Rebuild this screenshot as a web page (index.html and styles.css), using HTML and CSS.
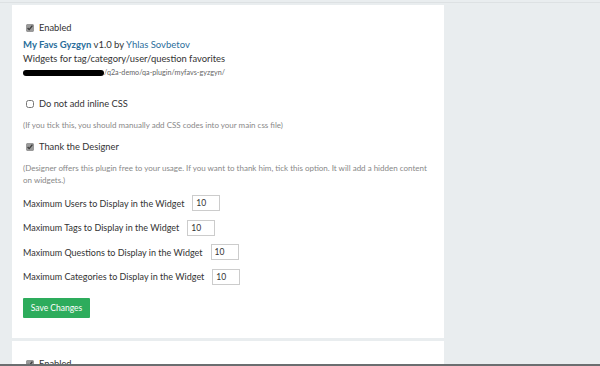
FILE: index.html
```html
<!DOCTYPE html>
<html lang="en">
  <head>
    <meta charset="UTF-8" />
    <title>Plugin options</title>
    <link rel="stylesheet" href="styles.css">
  </head>
  <body>
    <div class="topline"></div>
    <div class="page">
      <form class="panel">
        <label class="check"><input type="checkbox" checked /> Enabled</label>
        <div class="plugin-title">
          <a href="#" class="plugin-name">My Favs Gyzgyn</a> v1.0 by
          <a href="#" class="author">Yhlas Sovbetov</a>
        </div>
        <div class="plugin-desc">Widgets for tag/category/user/question favorites</div>
        <div class="plugin-path"><span class="redact"></span>/q2a-demo/qa-plugin/myfavs-gyzgyn/</div>

        <label class="check gap-top"><input type="checkbox" /> Do not add inline CSS</label>
        <p class="note">(If you tick this, you should manually add CSS codes into your main css file)</p>

        <label class="check"><input type="checkbox" checked /> Thank the Designer</label>
        <p class="note">(Designer offers this plugin free to your usage. If you want to thank him, tick this option. It will add a hidden content on widgets.)</p>

        <div class="fields">
          <label class="field">Maximum Users to Display in the Widget <input type="text" value="10" /></label>
          <label class="field">Maximum Tags to Display in the Widget <input type="text" value="10" /></label>
          <label class="field">Maximum Questions to Display in the Widget <input type="text" value="10" /></label>
          <label class="field">Maximum Categories to Display in the Widget <input type="text" value="10" /></label>
        </div>

        <div class="btn-box">
          <button type="button" class="save">Save Changes</button>
        </div>
      </form>

      <form class="panel">
        <label class="check"><input type="checkbox" checked /> Enabled</label>
      </form>
    </div>
    <div class="frame-edge"></div>
  </body>
</html>
```

FILE: styles.css
```css
body {
  margin: 0;
  background: #e9edef;
  font-family: Lato, "Open Sans", sans-serif;
  color: #333;
  overflow: hidden;
  height: 366px;
}

.topline {
  height: 2px;
  border-bottom: 1px solid #dde1e3;
}

.page {
  padding: 2px 0 0 12px;
  display: flex;
  flex-direction: column;
  gap: 3px;
}

.panel {
  width: 410px;
  background: #fff;
  padding: 16px 11px 20px;
  display: flex;
  flex-direction: column;
  align-items: flex-start;
}

.check {
  display: flex;
  align-items: center;
  gap: 5px;
  font-size: 9.3px;
  line-height: 14px;
  margin-left: 3px;
}

.check input {
  width: 8px;
  height: 8px;
  margin: 0;
  accent-color: #9a9a9a;
}

.gap-top {
  margin-top: 19px;
}

.plugin-title {
  margin-top: 3px;
  font-size: 9.5px;
  line-height: 14px;
}

.plugin-title a {
  color: #2b6e9b;
  text-decoration: none;
}

.plugin-name {
  font-weight: bold;
}

.plugin-desc {
  font-size: 9.4px;
  line-height: 14px;
}

.plugin-path {
  margin-top: 2px;
  font-size: 7.2px;
  line-height: 10px;
  color: #666;
  display: flex;
  align-items: center;
}

.redact {
  display: inline-block;
  width: 81px;
  height: 6px;
  background: #000;
  border-radius: 3px;
}

.note {
  margin: 8px 0 9px;
  font-size: 8px;
  line-height: 12px;
  color: #888;
  width: 410px;
}

.fields {
  margin-top: 0;
  display: flex;
  flex-direction: column;
  gap: 8.6px;
}

.field {
  display: flex;
  align-items: center;
  gap: 8px;
  font-size: 9px;
}

.field input {
  width: 20px;
  height: 12px;
  padding: 1px 3px;
  border: 1px solid #ccc;
  font-family: inherit;
  font-size: 8.5px;
  color: #333;
  outline: none;
}

.btn-box {
  margin-top: 10px;
}

.save {
  width: 67px;
  height: 20px;
  background: #2dac5c;
  color: #fff;
  border: none;
  border-radius: 1px;
  font-family: inherit;
  font-size: 8.5px;
  padding: 0;
}

.frame-edge {
  position: fixed;
  left: 0;
  right: 0;
  bottom: 0;
  height: 2px;
  background: #6b6e70;
}
```
